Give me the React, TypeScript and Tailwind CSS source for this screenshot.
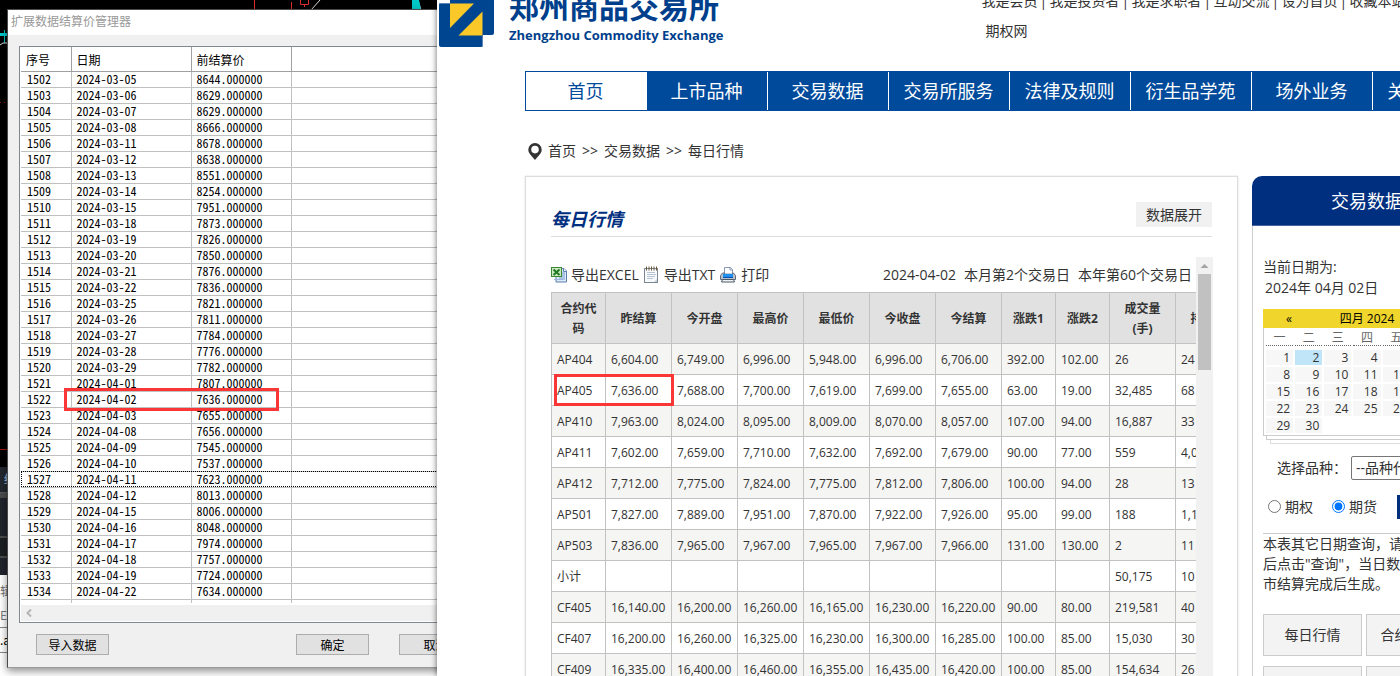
import type { ReactNode } from 'react';
import clsx from 'clsx';

const SETTLE_ROWS: [string, string, string][] = [
  ['1502', '2024-03-05', '8644.000000'],
  ['1503', '2024-03-06', '8629.000000'],
  ['1504', '2024-03-07', '8629.000000'],
  ['1505', '2024-03-08', '8666.000000'],
  ['1506', '2024-03-11', '8678.000000'],
  ['1507', '2024-03-12', '8638.000000'],
  ['1508', '2024-03-13', '8551.000000'],
  ['1509', '2024-03-14', '8254.000000'],
  ['1510', '2024-03-15', '7951.000000'],
  ['1511', '2024-03-18', '7873.000000'],
  ['1512', '2024-03-19', '7826.000000'],
  ['1513', '2024-03-20', '7850.000000'],
  ['1514', '2024-03-21', '7876.000000'],
  ['1515', '2024-03-22', '7836.000000'],
  ['1516', '2024-03-25', '7821.000000'],
  ['1517', '2024-03-26', '7811.000000'],
  ['1518', '2024-03-27', '7784.000000'],
  ['1519', '2024-03-28', '7776.000000'],
  ['1520', '2024-03-29', '7782.000000'],
  ['1521', '2024-04-01', '7807.000000'],
  ['1522', '2024-04-02', '7636.000000'],
  ['1523', '2024-04-03', '7655.000000'],
  ['1524', '2024-04-08', '7656.000000'],
  ['1525', '2024-04-09', '7545.000000'],
  ['1526', '2024-04-10', '7537.000000'],
  ['1527', '2024-04-11', '7623.000000'],
  ['1528', '2024-04-12', '8013.000000'],
  ['1529', '2024-04-15', '8006.000000'],
  ['1530', '2024-04-16', '8048.000000'],
  ['1531', '2024-04-17', '7974.000000'],
  ['1532', '2024-04-18', '7757.000000'],
  ['1533', '2024-04-19', '7724.000000'],
  ['1534', '2024-04-22', '7634.000000'],
];

const QUOTE_HEAD = ['合约代码', '昨结算', '今开盘', '最高价', '最低价', '今收盘', '今结算', '涨跌1', '涨跌2', '成交量(手)', '持仓量'];

const QUOTES = [
  ['AP404', '6,604.00', '6,749.00', '6,996.00', '5,948.00', '6,996.00', '6,706.00', '392.00', '102.00', '26', '24'],
  ['AP405', '7,636.00', '7,688.00', '7,700.00', '7,619.00', '7,699.00', '7,655.00', '63.00', '19.00', '32,485', '68'],
  ['AP410', '7,963.00', '8,024.00', '8,095.00', '8,009.00', '8,070.00', '8,057.00', '107.00', '94.00', '16,887', '33'],
  ['AP411', '7,602.00', '7,659.00', '7,710.00', '7,632.00', '7,692.00', '7,679.00', '90.00', '77.00', '559', '4,0'],
  ['AP412', '7,712.00', '7,775.00', '7,824.00', '7,775.00', '7,812.00', '7,806.00', '100.00', '94.00', '28', '13'],
  ['AP501', '7,827.00', '7,889.00', '7,951.00', '7,870.00', '7,922.00', '7,926.00', '95.00', '99.00', '188', '1,1'],
  ['AP503', '7,836.00', '7,965.00', '7,967.00', '7,965.00', '7,967.00', '7,966.00', '131.00', '130.00', '2', '11'],
  ['小计', '', '', '', '', '', '', '', '', '50,175', '10'],
  ['CF405', '16,140.00', '16,200.00', '16,260.00', '16,165.00', '16,230.00', '16,220.00', '90.00', '80.00', '219,581', '40'],
  ['CF407', '16,200.00', '16,260.00', '16,325.00', '16,230.00', '16,300.00', '16,285.00', '100.00', '85.00', '15,030', '30'],
  ['CF409', '16,335.00', '16,400.00', '16,460.00', '16,355.00', '16,435.00', '16,420.00', '100.00', '85.00', '154,634', '26'],
];

const NAV = ['上市品种', '交易数据', '交易所服务', '法律及规则', '衍生品学苑', '场外业务', '关于交易所'];
const TOP_LINKS = ['我是会员', '我是投资者', '我是求职者', '互动交流', '设为首页', '收藏本站'];

const WEEKS = [
  ['1', '2', '3', '4', '5', '6', '7'],
  ['8', '9', '10', '11', '12', '13', '14'],
  ['15', '16', '17', '18', '19', '20', '21'],
  ['22', '23', '24', '25', '26', '27', '28'],
  ['29', '30', '', '', '', '', ''],
];

function ExcelIcon() {
  return (
    <svg width="16" height="17" viewBox="0 0 16 17" className="shrink-0">
      <path d="M5 2.5h8l2.5 2.5v11H5z" fill="#dbe9f8" stroke="#5b7fb0" />
      <path d="M8 7h6M8 9h6M8 11h6M8 13h6" stroke="#7d9fd0" />
      <path d="M12.5 2.5V5.5h3" fill="#fff" stroke="#5b7fb0" />
      <rect x="0.5" y="1.5" width="10" height="9" fill="#cfe8c4" stroke="#3d8a35" />
      <path d="M2.5 3.5l6 5.5M8.5 3.5l-6 5.5" stroke="#1e7a22" strokeWidth="2" />
      <path d="M3 13.5h9" stroke="#9bb5dc" />
    </svg>
  );
}

function TxtIcon() {
  return (
    <svg width="15" height="17" viewBox="0 0 15 17" className="shrink-0">
      <rect x="0.5" y="2.5" width="13" height="14" fill="#f7f9fc" stroke="#7b8794" />
      <path d="M3 6.5h8M3 8.5h9M3 10.5h8M3 12.5h6" stroke="#b9c4d2" />
      <path d="M2.5 0.5v4M5 0.5v4M7.5 0.5v4M10 0.5v4M12.5 0.5v4" stroke="#6b5a3a" />
      <path d="M10 16l3-3v3z" fill="#c9d2dc" />
    </svg>
  );
}

function PrintIcon() {
  return (
    <svg width="16" height="17" viewBox="0 0 16 17" className="shrink-0">
      <path d="M4.5 8V1.5h6l2 2V8z" fill="#fff" stroke="#8a97b5" />
      <path d="M10 1.5V4h2.5" fill="none" stroke="#8a97b5" />
      <path d="M2.5 7L0.5 9.5v4h15v-4L13.5 7h-1v2h-8V7z" fill="#b9c1cc" stroke="#5f6b7d" />
      <rect x="3" y="8" width="10" height="4" fill="#1f8fee" />
      <path d="M3 11.5h10" stroke="#0b4fa8" />
      <path d="M2.5 13.5h11l1 2.5h-13z" fill="#eef1f5" stroke="#4d5868" />
    </svg>
  );
}

function Logo() {
  return (
    <svg width="55" height="60" viewBox="0 0 55 60" className="shrink-0">
      <rect x="11" y="2" width="44" height="46" rx="2" fill="#00458f" />
      <rect x="0" y="16" width="44" height="44" rx="2" fill="#00458f" />
      <path d="M11 16.5H35L11 41z" fill="#fac828" />
      <path d="M43.5 24.5V48.5H19.5z" fill="#fac828" />
      <path d="M0 16.5h11M43.5 48.5v11" stroke="#5c84b6" />
    </svg>
  );
}

// Chart terminal that shows behind both windows
function Backdrop() {
  return (
    <div className="absolute inset-0 flex flex-col bg-black">
      <svg width="440" height="467" viewBox="0 0 440 467" className="shrink-0">
        <path d="M254.5 0v10M291.5 2v8M288 9.5h8M304.5 4v3" stroke="#e02c2c" />
        <path d="M300.5 0v4.5h8V0" fill="none" stroke="#e02c2c" />
        <path d="M311 10l9-10M418 0l3 10" stroke="#ddd" fill="none" />
        <path d="M412 0h7l2 10h-9z" fill="#00c8c8" />
        <path d="M0 34.5h8" stroke="#00c8c8" strokeWidth="3" />
        <path d="M4.5 30v13" stroke="#00c8c8" />
        <path d="M0 45l3-2h5" stroke="#ddd" fill="none" />
        <path d="M0 102.5h8" stroke="#8a1010" strokeDasharray="1 3" />
        <path d="M0 449.5h8" stroke="#a01010" />
      </svg>
      <div className="h-[26px] shrink-0 border-b border-[#55585c] bg-[#23272e] font-['Noto_Sans_CJK_SC',sans-serif] text-xs leading-6 text-[#a9c8e8]">
        <span className="pl-1">结</span>
      </div>
      <div className="h-[5px] shrink-0 bg-[#4b4b4b]" />
      <div className="h-[38px] shrink-0 bg-[#20242c]" />
      <div className="h-[2px] shrink-0 bg-[#4b4b4b]" />
      <div className="h-[18px] shrink-0 bg-[#1c1f22]" />
      <div className="h-[2px] shrink-0 bg-[#4b4b4b]" />
      <div className="h-[17px] shrink-0 bg-[#20242c]" />
      <div className="flex grow flex-col bg-white font-['Noto_Sans_CJK_SC',sans-serif] text-xs leading-6 text-[#777]">
        <span className="pt-1">辑</span>
        <span>E]</span>
        <span className="border-y border-[#888] text-black">.a</span>
      </div>
    </div>
  );
}

function DialogButton({ children }: { children: ReactNode }) {
  return (
    <button className="h-[21px] w-[73px] shrink-0 border border-[#adadad] bg-[#e1e1e1] text-xs leading-[19px] text-black">
      {children}
    </button>
  );
}

function SettleDialog() {
  return (
    <section className="absolute top-[9px] left-[7px] flex h-[659px] w-[620px] flex-col border border-[#4a4a4a] border-b-[#9a9a9a] bg-[#f0f0f0] font-['Noto_Sans_CJK_SC',sans-serif] text-xs text-black shadow-[0_3px_8px_rgba(0,0,0,0.45)]">
      <h2 className="h-[25px] shrink-0 bg-white pl-[3px] leading-[22px] text-[#999]">扩展数据结算价管理器</h2>
      <div className="mx-[11px] mt-[11px] flex h-[577px] shrink-0 flex-col border border-[#828790] bg-white pl-px">
        <table className="w-full table-fixed border-collapse [font-feature-settings:'hwid']">
          <colgroup>
            <col className="w-[50px]" />
            <col className="w-[120px]" />
            <col className="w-[100px]" />
            <col />
          </colgroup>
          <thead>
            <tr className="h-6 border-b border-[#a0a0a0] text-left">
              {['序号', '日期', '前结算价', ''].map((h, i) => (
                <th key={i} className="border-r border-[#a0a0a0] pt-[3px] pl-[5px] leading-[20px] font-normal">
                  {h}
                </th>
              ))}
            </tr>
          </thead>
          <tbody>
            {SETTLE_ROWS.map(([no, date, price]) => (
              <tr
                key={no}
                className={clsx('h-4 border-b border-[#c0c0c0]', no === '1527' && 'outline-1 -outline-offset-1 outline-dotted outline-black')}
              >
                <td className="border-r border-[#c0c0c0] pb-px pl-[6px] leading-[14px]">{no}</td>
                <td className="border-r border-[#c0c0c0] pb-px pl-[5px] leading-[14px]">{date}</td>
                <td className="border-r border-[#c0c0c0] pb-px pl-[5px] leading-[14px]">{price}</td>
                <td />
              </tr>
            ))}
            <tr className="h-1">
              <td className="border-r border-[#c0c0c0]" />
              <td className="border-r border-[#c0c0c0]" />
              <td className="border-r border-[#c0c0c0]" />
              <td />
            </tr>
          </tbody>
        </table>
        <div className="mt-auto mb-px flex h-4 items-center bg-[#f0f0f0] pl-[5px]">
          <svg width="6" height="8" viewBox="0 0 6 8">
            <path d="M5 0.5L1.5 4L5 7.5" fill="none" stroke="#b5b5b5" strokeWidth="2" />
          </svg>
        </div>
      </div>
      <div className="flex items-center pt-[11px] pl-[28px]">
        <DialogButton>导入数据</DialogButton>
        <div className="ml-[187px] flex gap-[30px]">
          <DialogButton>确定</DialogButton>
          <DialogButton>取消</DialogButton>
        </div>
      </div>
    </section>
  );
}

function Header() {
  return (
    <header className="flex h-[71px] shrink-0 items-end overflow-hidden pl-[2px]">
      <div className="flex shrink-0 items-end pb-6">
        <Logo />
        <div className="ml-[15px] text-[#003f8c]">
          <div className="pb-[3px] text-[30px] leading-[30px] font-bold whitespace-nowrap">郑州商品交易所</div>
          <div className="pb-[2px] text-[13px] leading-[20px] font-bold whitespace-nowrap">Zhengzhou Commodity Exchange</div>
        </div>
      </div>
      <div className="ml-[258px] shrink-0 pb-[25px] text-sm leading-[30px]">
        <div className="flex whitespace-nowrap">
          {TOP_LINKS.map((t, i) => (
            <span key={t} className="flex">
              {i > 0 && <span className="w-3 text-center">|</span>}
              <a href="#">{t}</a>
            </span>
          ))}
        </div>
        <a href="#" className="block pl-1">期权网</a>
      </div>
    </header>
  );
}

function NavBar() {
  return (
    <nav className="ml-[88px] flex h-10 shrink-0 overflow-hidden border border-r-0 border-[#004a9c] bg-[#004a9c] text-lg leading-[38px]">
      <a href="#" className="w-[121px] shrink-0 bg-white pr-[2px] text-center text-[#004a9c]">首页</a>
      {NAV.map((n) => (
        <a key={n} href="#" className="w-[121px] shrink-0 border-r border-white pr-px text-center whitespace-nowrap text-white">
          {n}
        </a>
      ))}
    </nav>
  );
}

function Breadcrumb() {
  return (
    <div className="mt-[30px] ml-[91px] flex h-5 shrink-0 items-center gap-[6px] text-sm leading-5">
      <svg width="14" height="17" viewBox="0 0 14 17">
        <path fillRule="evenodd" d="M7 0a6.700 6.700 0 0 1 6.700 6.700C13.700 10.500 9.500 13.500 7 17 4.500 13.500.3 10.500.3 6.700A6.700 6.700 0 0 1 7 0zm0 2.800a3.800 3.800 0 1 0 0 7.600 3.800 3.800 0 0 0 0-7.600z" fill="#333" />
      </svg>
      <a href="#">首页</a>
      <span>&gt;&gt;</span>
      <a href="#">交易数据</a>
      <span>&gt;&gt;</span>
      <span>每日行情</span>
    </div>
  );
}

function QuoteTable() {
  return (
    <table className="w-[690px] table-fixed border-collapse text-xs leading-5">
      <colgroup>
        <col className="w-[54px]" />
        <col className="w-[66px]" />
        <col className="w-[66px]" />
        <col className="w-[66px]" />
        <col className="w-[66px]" />
        <col className="w-[66px]" />
        <col className="w-[66px]" />
        <col className="w-[54px]" />
        <col className="w-[54px]" />
        <col className="w-[66px]" />
        <col className="w-[66px]" />
      </colgroup>
      <thead>
        <tr className="h-[51px] bg-[#e1e1e1]">
          {QUOTE_HEAD.map((h) => (
            <th key={h} className="border border-[#c2c2c2] px-[5px] pt-[2px] font-bold">{h}</th>
          ))}
        </tr>
      </thead>
      <tbody>
        {QUOTES.map((row) => (
          <tr key={row[0]} className="h-[31px] odd:bg-[#f5f5f3]">
            {row.map((cell, i) => (
              <td key={i} className="border border-[#c2c2c2] pt-[2px] pl-[5px] whitespace-nowrap">{cell}</td>
            ))}
          </tr>
        ))}
      </tbody>
    </table>
  );
}

function QuotePanel() {
  return (
    <section className="flex w-[713px] shrink-0 flex-col border border-[#ddd] pt-[25px] pr-6 pl-[25px] shadow-[0_0_2px_#ddd]">
      <div className="mr-px flex h-[35px] shrink-0 items-start justify-between border-b border-[#ddd]">
        <h1 className="text-lg leading-[34px] font-bold text-[#002f80] italic">每日行情</h1>
        <button className="h-[25px] w-[76px] bg-[#f1f1f1] text-sm leading-[25px]">数据展开</button>
      </div>
      <div className="mt-5 flex grow">
        <div className="min-w-0 grow overflow-hidden">
          <div className="flex h-[35px] items-center justify-between pr-1 text-sm leading-5 whitespace-nowrap">
            <div className="flex items-center gap-[5px]">
              <a href="#" className="flex items-center gap-1"><ExcelIcon />导出EXCEL</a>
              <a href="#" className="flex items-center gap-[5px]"><TxtIcon />导出TXT</a>
              <a href="#" className="flex items-center gap-[5px]"><PrintIcon />打印</a>
            </div>
            <div className="flex gap-2">
              <span>2024-04-02</span>
              <span>本月第2个交易日</span>
              <span>本年第60个交易日</span>
            </div>
          </div>
          <QuoteTable />
        </div>
        <div className="flex w-[17px] shrink-0 flex-col items-center bg-[#f1f1f1]">
          <svg width="17" height="17" viewBox="0 0 17 17">
            <path d="M4.5 11L8.5 7l4 4z" fill="#a3a3a3" />
          </svg>
          <div className="h-24 w-[13px] bg-[#c1c1c1]" />
        </div>
      </div>
    </section>
  );
}

function Calendar() {
  return (
    <div className="w-[208px]">
      <div className="h-[127px] border border-[#ccc]">
        <div className="-mx-px -mt-px flex h-[19px] items-center bg-[#efd52c] text-xs text-black">
          <button className="w-[52px] text-center">«</button>
          <span className="grow text-center">四月 2024</span>
          <button className="w-[52px] text-center">»</button>
        </div>
        <table className="w-full table-fixed border-separate border-spacing-x-[2px] border-spacing-y-0 text-center text-xs text-[#666]">
          <thead>
            <tr>
              {['一', '二', '三', '四', '五', '六', '日'].map((d) => (
                <th key={d} className="h-[18px] border-b border-dotted border-[#666] pt-[3px] leading-[14px] font-normal">{d}</th>
              ))}
            </tr>
          </thead>
        </table>
        <table className="mt-[2px] w-full table-fixed border-separate border-spacing-[2px] text-right text-xs">
          <tbody>
            {WEEKS.map((w) => (
              <tr key={w[0]}>
                {w.map((d, i) => (
                  <td
                    key={i}
                    className={clsx('h-[15px] pr-[3px] leading-[15px]', d && (d === '2' ? 'bg-[#c0e4f8]' : 'bg-[#f7f7f7]'))}
                  >
                    {d}
                  </td>
                ))}
              </tr>
            ))}
          </tbody>
        </table>
      </div>
      <div className="ml-[3px] h-1 border-b border-l border-[#ccc]" />
      <div className="ml-[7px] h-1 border-b border-l border-[#ddd]" />
    </div>
  );
}

function PanelLink({ children }: { children: ReactNode }) {
  return (
    <a href="#" className="h-[42px] w-[99px] shrink-0 border border-[#ccc] bg-[#f3f3f3] text-center leading-10">
      {children}
    </a>
  );
}

function SidePanel() {
  return (
    <aside className="flex w-[266px] shrink-0 flex-col text-sm">
      <h2 className="h-[50px] shrink-0 rounded-t-[10px] border-b border-[#46649c] bg-[#002f80] text-center text-lg leading-[50px] text-white">
        交易数据查询
      </h2>
      <div className="grow border-x border-[#ccc] px-[10px] pt-[30px]">
        <p className="leading-[21px]">当前日期为:</p>
        <p className="mb-[11px] pl-[2px] leading-[21px]">2024年 04月 02日</p>
        <Calendar />
        <div className="mt-3 flex h-[24px] items-center pl-[14px]">
          <label htmlFor="variety" className="w-[74px] shrink-0">选择品种：</label>
          <select id="variety" className="h-[24px] w-[110px] appearance-none rounded-[2px] border border-[#767676] bg-white pl-1 text-sm">
            <option>--品种代码--</option>
          </select>
        </div>
        <div className="flex h-[54px] items-center border-b border-[#ccc] pl-[5px]">
          <input id="opt" type="radio" name="kind" className="m-0 h-[13px] w-[13px] accent-[#0075ff]" />
          <label htmlFor="opt" className="ml-1 w-[47px]">期权</label>
          <input id="fut" type="radio" name="kind" defaultChecked className="m-0 h-[13px] w-[13px] accent-[#0075ff]" />
          <label htmlFor="fut" className="ml-1 w-12">期货</label>
          <button className="h-6 w-[60px] bg-[#002f80] text-white">查询</button>
        </div>
        <p className="w-[250px] leading-5">
          本表其它日期查询，请选择日期
          <br />
          后点击"查询"，当日数据在收
          <br />
          市结算完成后生成。
        </p>
        <div className="mt-5 flex flex-wrap gap-x-[4px] gap-y-[10px]">
          <PanelLink>每日行情</PanelLink>
          <PanelLink>合约月统计</PanelLink>
          <PanelLink>月度行情</PanelLink>
          <PanelLink>年度行情</PanelLink>
        </div>
      </div>
    </aside>
  );
}

export default function App() {
  return (
    <div className="relative h-screen overflow-hidden">
      <Backdrop />
      <SettleDialog />
      <main className="absolute inset-y-0 right-0 left-[437px] flex flex-col overflow-hidden bg-white font-['Open_Sans','Noto_Sans_CJK_SC',sans-serif] text-[#333] shadow-[0_0_6px_rgba(0,0,0,0.6)]">
        <Header />
        <NavBar />
        <Breadcrumb />
        <div className="mt-[15px] ml-[88px] flex grow gap-[14px]">
          <QuotePanel />
          <SidePanel />
        </div>
      </main>
      {/* marks on the two figures that agree */}
      <div className="absolute top-[388px] left-[64px] h-[23px] w-[215px] border-3 border-[#fb3636]" />
      <div className="absolute top-[374px] left-[554px] h-[32px] w-[120px] border-3 border-[#fb3636]" />
    </div>
  );
}
